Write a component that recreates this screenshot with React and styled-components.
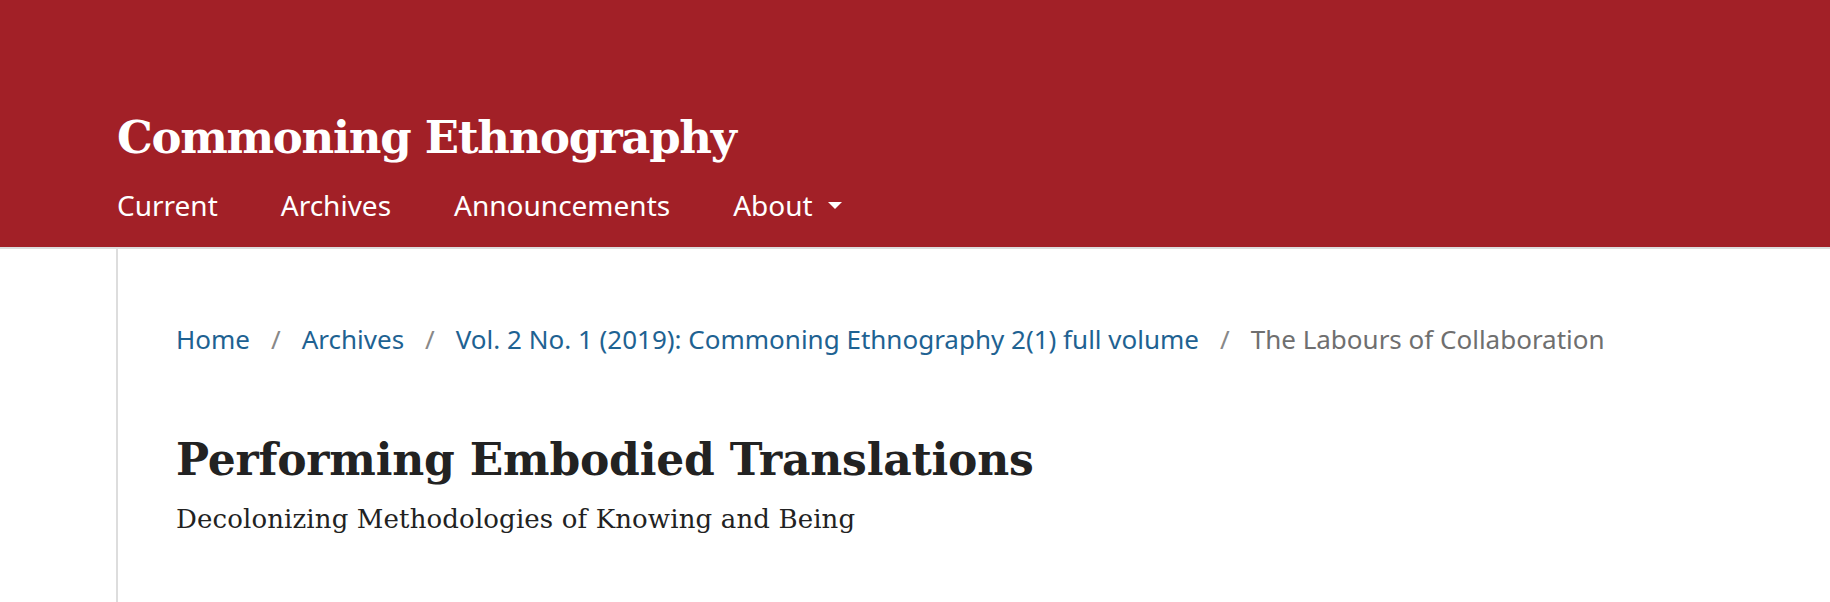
import styled, { createGlobalStyle } from "styled-components";

const Global = createGlobalStyle`
  html, body {
    margin: 0;
    padding: 0;
    background: #fff;
  }
  body {
    font-family: "Noto Sans", "Open Sans", sans-serif;
  }
  a {
    text-decoration: none;
  }
`;

const Header = styled.header`
  background-color: #a22027;
  border-bottom: 2px solid #ddd;
  padding: 110px 0 24px 117px;
`;

const SiteName = styled.a`
  display: block;
  margin: 0;
  font-family: "DejaVu Serif", serif;
  font-weight: bold;
  font-size: 45px;
  letter-spacing: -1.3px;
  line-height: 56px;
  color: #fff;
`;

const Nav = styled.nav`
  display: flex;
  align-items: center;
  gap: 63px;
  margin-top: 21px;
  height: 36px;
`;

const NavLink = styled.a`
  display: flex;
  align-items: center;
  gap: 15px;
  font-size: 28px;
  line-height: 36px;
  color: #fff;
`;

const Caret = styled.span`
  width: 0;
  height: 0;
  border-left: 7px solid transparent;
  border-right: 7px solid transparent;
  border-top: 7px solid #fff;
`;

const Main = styled.main`
  margin-left: 116px;
  border-left: 2px solid #ddd;
  padding: 72px 0 67px 58px;
`;

const Crumbs = styled.ol`
  display: flex;
  align-items: center;
  list-style: none;
  margin: 0;
  padding: 0;
  font-size: 26px;
  line-height: 36px;
`;

const Crumb = styled.li`
  display: flex;
  align-items: center;
  color: ${(p) => (p.current ? "#6f6f6f" : "#1e6292")};
`;

const Sep = styled.span`
  color: #888;
  padding: 0 21px;
`;

const Title = styled.h1`
  margin: 76px 0 0;
  font-family: "DejaVu Serif", serif;
  font-weight: bold;
  font-size: 44px;
  letter-spacing: -0.2px;
  line-height: 54px;
  color: #222;
`;

const Subtitle = styled.div`
  margin-top: 15px;
  font-family: "DejaVu Serif", serif;
  font-size: 26px;
  letter-spacing: 0.13px;
  line-height: 34px;
  color: #222;
`;

const crumbs = [
  "Home",
  "Archives",
  "Vol. 2 No. 1 (2019): Commoning Ethnography 2(1) full volume",
];

export default function App() {
  return (
    <>
      <Global />
      <Header>
        <SiteName href="#">Commoning Ethnography</SiteName>
        <Nav>
          <NavLink href="#">Current</NavLink>
          <NavLink href="#">Archives</NavLink>
          <NavLink href="#">Announcements</NavLink>
          <NavLink href="#">
            About
            <Caret />
          </NavLink>
        </Nav>
      </Header>
      <Main>
        <Crumbs>
          {crumbs.map((c) => (
            <Crumb key={c}>
              <a href="#" style={{ color: "inherit" }}>
                {c}
              </a>
              <Sep>/</Sep>
            </Crumb>
          ))}
          <Crumb current>The Labours of Collaboration</Crumb>
        </Crumbs>
        <Title>Performing Embodied Translations</Title>
        <Subtitle>Decolonizing Methodologies of Knowing and Being</Subtitle>
      </Main>
    </>
  );
}
